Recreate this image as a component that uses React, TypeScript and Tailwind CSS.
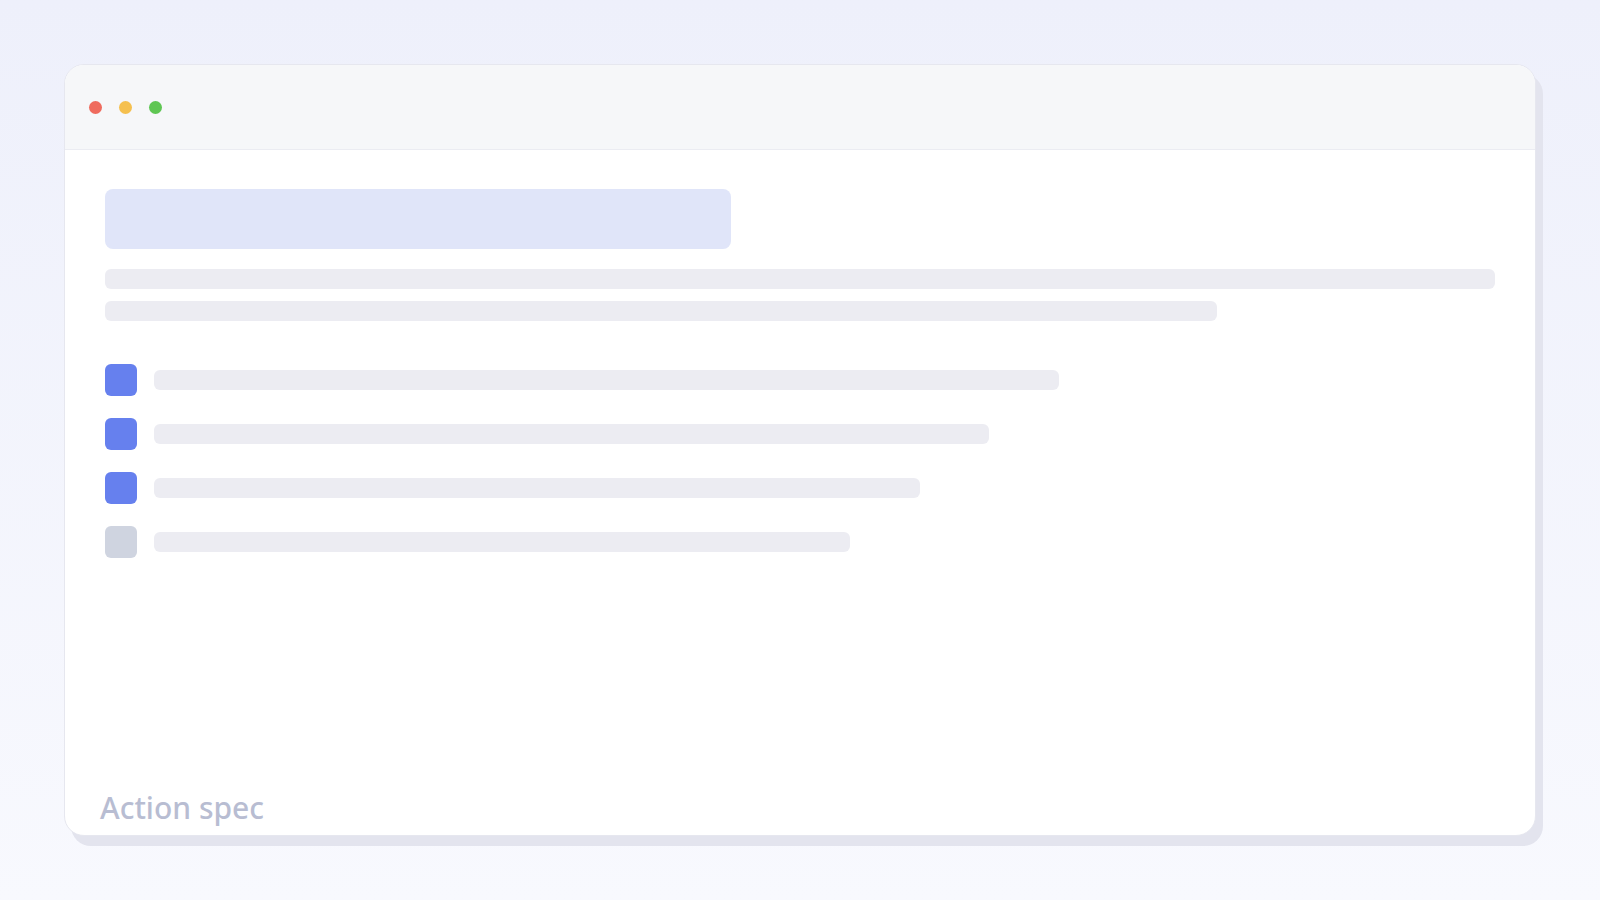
export default function App() {
  const rows = [
    { w: 'w-[905px]', on: true },
    { w: 'w-[835px]', on: true },
    { w: 'w-[766px]', on: true },
    { w: 'w-[696px]', on: false },
  ];

  return (
    <div className="h-screen w-full p-16 bg-gradient-to-b from-[#eef0fb] to-[#f8f9fe] font-['Open_Sans',sans-serif]">
      <div className="flex h-full flex-col overflow-hidden rounded-[20px] border border-[#e6e7ef] bg-white shadow-[7px_10px_0_#e3e4ee]">
        {/* Title bar */}
        <div className="flex h-[85px] shrink-0 items-center gap-[17px] border-b border-[#ebecf2] bg-[#f6f7f9] pl-[24px]">
          <span className="h-[13px] w-[13px] rounded-full bg-[#ef6b5e]" />
          <span className="h-[13px] w-[13px] rounded-full bg-[#f5c04f]" />
          <span className="h-[13px] w-[13px] rounded-full bg-[#5fc653]" />
        </div>

        {/* Content */}
        <div className="flex flex-1 flex-col">
          <div className="px-10 pt-[39px]">
            <div className="h-[60px] w-[626px] rounded-lg bg-[#e0e5f9]" />
            <div className="mt-5 h-5 w-full rounded-md bg-[#ececf2]" />
            <div className="mt-3 h-5 w-[80%] rounded-md bg-[#ececf2]" />

            <div className="mt-[43px] flex flex-col gap-[22px]">
              {rows.map((r, i) => (
                <div key={i} className="flex items-center gap-[17px]">
                  <div className={r.on ? 'h-8 w-8 rounded-md bg-[#6680ee]' : 'h-8 w-8 rounded-md bg-[#cfd4e0]'} />
                  <div className={`h-5 rounded-md bg-[#ececf2] ${r.w}`} />
                </div>
              ))}
            </div>
          </div>

          <div className="mt-auto pb-[12px] pl-[35px] font-['Noto_Sans',sans-serif] text-[30px] font-medium leading-none text-[#b8bdd2]">
            Action spec
          </div>
        </div>
      </div>
    </div>
  );
}
